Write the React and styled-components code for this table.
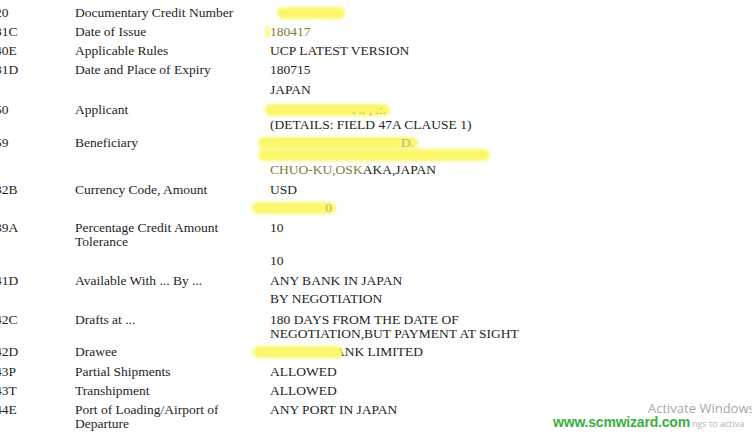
import React from "react";
import styled, { createGlobalStyle } from "styled-components";

const GlobalStyle = createGlobalStyle`
  html, body {
    margin: 0;
    padding: 0;
    background: #ffffff;
    overflow: hidden;
  }
`;

const rows = [
  { code: "20", label: "Documentary Credit Number", h: 19, values: [{ mask: { w: 68, ml: 7 } }] },
  { code: "31C", label: "Date of Issue", h: 19, values: [{ text: "180417", tint: true, lead: true }] },
  { code: "40E", label: "Applicable Rules", h: 19, values: [{ text: "UCP LATEST VERSION" }] },
  { code: "31D", label: "Date and Place of Expiry", h: 20, values: [{ text: "180715" }] },
  { code: "", label: "", h: 20, values: [{ text: "JAPAN" }] },
  {
    code: "50",
    label: "Applicant",
    h: 33,
    values: [
      { mask: { w: 125, ml: -5, tail: ". .. , .:." }, h: 15 },
      { text: "(DETAILS: FIELD 47A CLAUSE 1)", h: 18 },
    ],
  },
  {
    code: "59",
    label: "Beneficiary",
    h: 47,
    values: [
      { mask: { w: 160, ml: -12, tail: "D." }, h: 12 },
      { mask: { w: 232, ml: -12 }, h: 15 },
      { text: "CHUO-KU,OSKAKA,JAPAN", tintTo: 11, h: 20 },
    ],
  },
  {
    code: "32B",
    label: "Currency Code, Amount",
    h: 38,
    values: [
      { text: "USD", h: 18 },
      { mask: { w: 84, ml: -18, tail: "0" }, h: 20 },
    ],
  },
  { code: "39A", label: "Percentage Credit Amount", label2: "Tolerance", h: 33, values: [{ text: "10" }] },
  { code: "", label: "", h: 20, values: [{ text: "10" }] },
  {
    code: "41D",
    label: "Available With ... By ...",
    h: 39,
    values: [{ text: "ANY BANK IN JAPAN", h: 18 }, { text: "BY NEGOTIATION", h: 21 }],
  },
  {
    code: "42C",
    label: "Drafts at ...",
    h: 32,
    values: [{ text: "180 DAYS FROM THE DATE OF", text2: "NEGOTIATION,BUT PAYMENT AT SIGHT" }],
  },
  { code: "42D", label: "Drawee", h: 20, values: [{ mask: { w: 90, ml: -17, after: "ANK LIMITED" } }] },
  { code: "43P", label: "Partial Shipments", h: 19, values: [{ text: "ALLOWED" }] },
  { code: "43T", label: "Transhipment", h: 19, values: [{ text: "ALLOWED" }] },
  { code: "44E", label: "Port of Loading/Airport of", label2: "Departure", h: 32, values: [{ text: "ANY PORT IN JAPAN" }] },
];

export default function App() {
  return (
    <>
      <GlobalStyle />
      <Page>
        <Sheet>
          {rows.map((row, i) => (
            <Row key={i} $h={row.h}>
              <Code>{row.code}</Code>
              <Label>
                {row.label}
                {row.label2 && (
                  <>
                    <br />
                    {row.label2}
                  </>
                )}
              </Label>
              <Values>
                {row.values.map((v, j) => (
                  <Line key={j} $h={v.h}>
                    {v.mask ? (
                      <MaskWrap $ml={v.mask.ml}>
                        <Mask $w={v.mask.w} />
                        {v.mask.tail && <Faint>{v.mask.tail}</Faint>}
                        {v.mask.after && <After>{v.mask.after}</After>}
                      </MaskWrap>
                    ) : v.tintTo ? (
                      <>
                        <Tint>{v.text.slice(0, v.tintTo)}</Tint>
                        {v.text.slice(v.tintTo)}
                      </>
                    ) : v.tint ? (
                      <>
                        {v.lead && <Lead />}
                        <Tint>{v.text}</Tint>
                      </>
                    ) : (
                      <>
                        {v.text}
                        {v.text2 && (
                          <>
                            <br />
                            {v.text2}
                          </>
                        )}
                      </>
                    )}
                  </Line>
                ))}
              </Values>
            </Row>
          ))}
        </Sheet>
        <Activate>Activate Windows</Activate>
        <Brand>
          <Site>www.scmwizard.com</Site>
          <Hint>ngs to activa</Hint>
        </Brand>
      </Page>
    </>
  );
}

const Page = styled.div`
  position: relative;
  width: 752px;
  height: 440px;
  overflow: hidden;
  background: #ffffff;
  font-family: "Liberation Serif", "Times New Roman", serif;
  font-size: 13.5px;
  color: #1e1e1e;
`;

const Sheet = styled.div`
  display: flex;
  flex-direction: column;
  padding-top: 6px;
  margin-left: -5px;
`;

const Row = styled.div`
  display: grid;
  grid-template-columns: 80px 195px 1fr;
  min-height: ${(p) => p.$h}px;
  line-height: 14px;
`;

const Code = styled.div`
  white-space: nowrap;
`;

const Label = styled.div`
  white-space: nowrap;
`;

const Values = styled.div`
  display: flex;
  flex-direction: column;
`;

const Line = styled.div`
  white-space: nowrap;
  height: ${(p) => (p.$h ? `${p.$h}px` : "auto")};
`;

const Tint = styled.span`
  color: #807c36;
`;

const Lead = styled.span`
  display: inline-block;
  width: 5px;
  height: 12px;
  margin-left: -5px;
  vertical-align: -2px;
  background: rgba(250, 245, 120, 0.7);
  filter: blur(1px);
`;

const MaskWrap = styled.span`
  position: relative;
  display: inline-flex;
  align-items: center;
  margin-left: ${(p) => p.$ml}px;
  height: 14px;
`;

const Mask = styled.span`
  display: inline-block;
  width: ${(p) => p.$w}px;
  height: 12px;
  border-radius: 6px;
  background: #fbf76a;
  filter: blur(1.5px);
`;

const Faint = styled.span`
  position: absolute;
  right: 4px;
  color: #b7b38a;
`;

const After = styled.span`
  margin-left: -8px;
  color: #1e1e1e;
`;

const Activate = styled.div`
  position: absolute;
  left: 648px;
  top: 399px;
  font-family: "Open Sans", "Liberation Sans", sans-serif;
  font-size: 13px;
  color: #a8a8a8;
  white-space: nowrap;
`;

const Brand = styled.div`
  position: absolute;
  left: 553px;
  top: 414px;
  display: flex;
  align-items: baseline;
  white-space: nowrap;
`;

const Site = styled.span`
  font-family: "Liberation Sans", Arial, sans-serif;
  font-size: 14px;
  font-weight: bold;
  color: #3aae3f;
  letter-spacing: -0.2px;
`;

const Hint = styled.span`
  margin-left: 2px;
  font-family: "Open Sans", "Liberation Sans", sans-serif;
  font-size: 9px;
  color: #b5b5b5;
`;
